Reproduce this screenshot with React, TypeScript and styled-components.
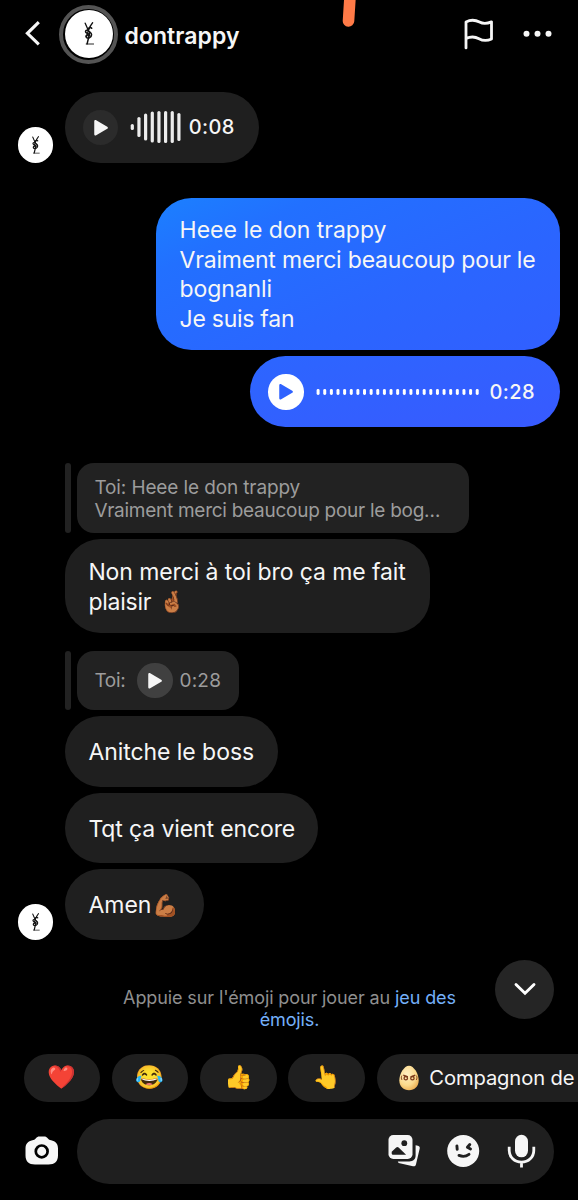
import React from 'react';
import styled, { createGlobalStyle } from 'styled-components';

const GlobalStyle = createGlobalStyle`
  * { box-sizing: border-box; }
  body {
    margin: 0;
    background: #000;
    color: #f6f6f6;
    font-family: Inter, "Liberation Sans", sans-serif;
    overflow: hidden;
  }
  svg { display: block; flex: none; }
`;

const Screen = styled.main`
  position: relative;
  display: flex;
  flex-direction: column;
  width: 578px;
  height: 1200px;
  overflow: hidden;
  background: #000;
`;

const Header = styled.header`
  display: flex;
  align-items: center;
  height: 68.5px;
  padding: 0 26.5px 0 23.5px;
`;

const HeaderAvatar = styled.div`
  display: grid;
  place-items: center;
  width: 59px;
  height: 59px;
  margin-left: 17.5px;
  border: 4px solid #545454;
  border-radius: 50%;
`;

const UserName = styled.h1`
  flex: 1;
  margin: 3px 0 0 6.5px;
  font-size: 23px;
  font-weight: 600;
  line-height: 30px;
  letter-spacing: 0.06px;
`;

const HeaderActions = styled.div`
  display: flex;
  align-items: center;
  gap: 29px;
`;

const StatusMark = styled.svg`
  position: absolute;
  top: 0;
  left: 336px;
`;

const AvatarDisc = styled.div<{ $size: number }>`
  display: grid;
  place-items: center;
  flex: none;
  width: ${p => p.$size}px;
  height: ${p => p.$size}px;
  border-radius: 50%;
  background: #fff;
`;

const Thread = styled.section`
  display: flex;
  flex-direction: column;
  height: 871.5px;
  padding: 23.5px 18px 0 17.5px;
`;

const Row = styled.div<{ $side?: 'left' | 'right'; $top?: number }>`
  display: flex;
  align-items: flex-end;
  justify-content: ${p => (p.$side === 'right' ? 'flex-end' : 'flex-start')};
  gap: 12px;
  margin-top: ${p => p.$top ?? 6}px;
  padding-left: ${p => (p.$side === 'left' ? 47.5 : 0)}px;
`;

const Bubble = styled.div<{ $tone?: 'sent' | 'sentLow'; $width: number }>`
  display: flex;
  flex-direction: column;
  justify-content: center;
  width: ${p => p.$width}px;
  min-height: 70.7px;
  padding: 18.8px 23.4px 16px;
  border-radius: 35.5px;
  font-size: 23px;
  line-height: 29.5px;
  white-space: nowrap;
  background: ${p =>
    p.$tone === 'sent'
      ? 'linear-gradient(155deg, #1b80ff 0%, #2270ff 22%, #2a66ff 60%, #315fff 100%)'
      : p.$tone === 'sentLow'
        ? 'linear-gradient(165deg, #2c66ff 0%, #385aff 100%)'
        : '#1f1f1f'};
`;

const TextLine = styled.span<{ $track?: number }>`
  display: flex;
  align-items: center;
  height: 29.5px;
  letter-spacing: ${p => p.$track ?? 0}px;
`;

const Emoji = styled.span<{ $size: number; $gap?: number }>`
  margin-left: ${p => p.$gap ?? 0}px;
  font-family: "Noto Color Emoji", sans-serif;
  font-size: ${p => p.$size}px;
  line-height: 1;
  letter-spacing: 0;
`;

const SkinEmoji = styled(Emoji)`
  filter: brightness(1.18) saturate(1.15);
`;

const Voice = styled(Bubble)`
  flex-direction: row;
  align-items: center;
  justify-content: flex-start;
  padding: 0 17.8px;
`;

const PlayDisc = styled.div<{ $fill: string }>`
  display: grid;
  place-items: center;
  flex: none;
  width: 35.5px;
  height: 35.5px;
  border-radius: 50%;
  background: ${p => p.$fill};
`;

const Wave = styled.svg<{ $left: number; $right: number }>`
  margin: 0 ${p => p.$right}px 0 ${p => p.$left}px;
`;

const Duration = styled.span`
  padding-top: 1.5px;
  font-size: 20px;
  font-weight: 500;
  letter-spacing: 0.35px;
`;

const Quote = styled.div`
  display: flex;
  align-items: stretch;
  gap: 6.3px;
`;

const QuoteBar = styled.div`
  width: 5.5px;
  border-radius: 3px;
  background: #222;
`;

const QuoteCard = styled.div<{ $width: number; $height: number }>`
  display: flex;
  flex-direction: column;
  justify-content: center;
  width: ${p => p.$width}px;
  height: ${p => p.$height}px;
  padding: 2px 17.6px 0;
  border-radius: 17px;
  background: #222;
  color: #9c9c9c;
  font-size: 19px;
  line-height: 23.5px;
  white-space: nowrap;
`;

const QuoteLine = styled.span<{ $track: number }>`
  letter-spacing: ${p => p.$track}px;
`;

const QuoteVoice = styled(QuoteCard)`
  flex-direction: row;
  align-items: center;
  justify-content: flex-start;
  padding-top: 0;
`;

const QuoteLabel = styled.span<{ $width: number }>`
  width: ${p => p.$width}px;
  padding-top: 1px;
  letter-spacing: -0.3px;
`;

const QuoteTime = styled.span`
  margin-left: 6.5px;
  padding-top: 1px;
  letter-spacing: 0.25px;
`;

const Notice = styled.p`
  margin: 47px 0 0;
  padding-left: 1px;
  text-align: center;
  font-size: 18px;
  line-height: 22.3px;
  letter-spacing: -0.11px;
  color: #8f8f8f;
`;

const Link = styled.a`
  color: #74b0fa;
`;

const ScrollDown = styled.button`
  position: absolute;
  top: 959.5px;
  left: 494.8px;
  display: grid;
  place-items: center;
  width: 59.5px;
  height: 59.5px;
  padding: 0;
  border: 0;
  border-radius: 50%;
  background: #252525;
`;

const Chips = styled.div`
  display: flex;
  gap: 11.8px;
  margin-top: 22.5px;
  padding-left: 23.6px;
`;

const Chip = styled.div<{ $wide?: boolean }>`
  display: flex;
  align-items: center;
  flex: none;
  justify-content: ${p => (p.$wide ? 'flex-start' : 'center')};
  width: ${p => (p.$wide ? 240 : 76.5)}px;
  height: 47.5px;
  padding-left: ${p => (p.$wide ? 22 : 0)}px;
  border-radius: 24px;
  background: #1f1f1f;
  font-size: 20.2px;
  letter-spacing: -0.12px;
  white-space: nowrap;
`;

const Tilted = styled(Emoji)`
  transform: rotate(-8deg);
`;

const ChipLabel = styled.span`
  margin-left: 10.5px;
`;

const Composer = styled.footer`
  display: flex;
  align-items: center;
  gap: 18.5px;
  margin-top: 17px;
  padding-left: 24.8px;
`;

const Field = styled.div`
  display: flex;
  align-items: center;
  justify-content: flex-end;
  gap: 26.5px;
  width: 477.5px;
  height: 65px;
  padding-right: 18.5px;
  border-radius: 32.5px;
  background: #1f1f1f;
`;

const Monogram = ({ scale }: { scale: number }) => (
  <svg width={12 * scale} height={24 * scale} viewBox="0 0 12 24" fill="none" stroke="#111" strokeLinecap="round">
    <path d="M2.2 1.2 5.6 9M9.6.8C8 2.6 6.700 5 5.400 8.600L3.400 15" strokeWidth="1.300" />
    <path d="M8.700 6.300C7.600 4.900 4.500 5.800 4.900 8c.4 2 3.800 2.200 3.700 4.800-.1 2.600-3.300 4-5 2.800-1.700-1.300.3-3.200 2-2.400" strokeWidth="1.500" />
    <path d="M4.200 8.400C2.800 8.200 2 9.400 2.900 10.500c1 1.200 3.700 1.200 3.900 3.200M6.800 10.500 4.100 21.800" strokeWidth="1.500" />
    <path d="M3.200 22h7.400" strokeWidth=".9" />
  </svg>
);

const PlayGlyph = ({ color }: { color: string }) => (
  <svg width="17.500" height="19.500" viewBox="0 0 16 18">
    <path d="M2 3.100v11.800c0 1 1 1.500 1.800 1L14 10c.8-.5.8-1.500 0-2L3.800 2.100C3 1.600 2 2.100 2 3.100Z" fill={color} />
  </svg>
);

const SHORT_WAVE = [6, 20, 27, 31, 32, 32, 32, 28];

const Egg = () => (
  <svg width="20" height="26" viewBox="0 0 20 26">
    <defs>
      <radialGradient id="egg" cx=".4" cy=".35" r=".75">
        <stop offset="0" stopColor="#fff0c4" />
        <stop offset=".6" stopColor="#fbd98c" />
        <stop offset="1" stopColor="#e9a648" />
      </radialGradient>
    </defs>
    <path d="M10 .8C5.200.8.3 8.800.3 15.500.3 21.400 4.500 25.300 10 25.300s9.700-3.900 9.700-9.800C19.700 8.800 14.800.8 10 .8Z" fill="url(#egg)" />
    <g fill="none" stroke="#7d3b1c" strokeLinecap="round">
      <path d="M4.800 10.300 8.300 11.600M15.800 10.300 12.300 11.600" strokeWidth="1.400" />
      <circle cx="6.800" cy="13.200" r="1.700" strokeWidth="1.300" />
      <circle cx="13.400" cy="13.200" r="1.700" strokeWidth="1.300" />
      <path d="M2.700 11c-.6 1.200-.5 2.500.1 3.600M17.600 11c.6 1.200.5 2.500-.1 3.600" strokeWidth=".9" />
    </g>
  </svg>
);

const BackIcon = () => (
  <svg width="18" height="30" viewBox="0 0 18 30">
    <path d="M14.800 3.200 3.400 14.300 14.800 25.400" fill="none" stroke="#f6f6f6" strokeWidth="3.100" />
  </svg>
);

const FlagIcon = () => (
  <svg width="30" height="33" viewBox="0 0 30 33" fill="none" stroke="#f6f6f6" strokeWidth="2.800" strokeLinecap="round" strokeLinejoin="round">
    <path d="M2 29.900V3.900C6.500 1.700 11 1.700 15.500 4.100c4 2.200 7.500 1.700 12-.2v17C23 23.100 19 22.900 15 20.700c-4.500-2.400-8.500-2.200-13-.2" />
  </svg>
);

const MoreIcon = () => (
  <svg width="29" height="8" viewBox="0 0 29 8" fill="#f6f6f6">
    <circle cx="3.500" cy="3.700" r="3" />
    <circle cx="14.500" cy="3.700" r="3" />
    <circle cx="25.500" cy="3.700" r="3" />
  </svg>
);

const CameraIcon = () => (
  <svg width="33.500" height="30" viewBox="0 0 33.500 30">
    <path d="M10.700 2.400C12 1.100 13 .6 14.300.6h5c1.300 0 2.300.5 3.600 1.800 1.100 1.100 1.500 1.500 3.200 1.800 4.400.8 6.900 3.500 6.900 8.200v6.900c0 6.300-3.300 9.200-9.600 9.200H10C3.800 28.500.5 25.600.5 19.300v-6.900c0-4.700 2.500-7.400 6.900-8.200 1.700-.3 2.200-.7 3.300-1.800Z" fill="#f6f6f6" />
    <circle cx="16.700" cy="15.400" r="5.900" fill="none" stroke="#000" strokeWidth="2.700" />
  </svg>
);

const GalleryIcon = () => (
  <svg width="33" height="34" viewBox="0 0 33 34">
    <path d="M27.600 11.200l2.400.5c1.400.4 2 1.400 1.700 2.800L28 30.300c-.3 1.700-1.400 2.300-3 2L10.600 28.900l-.8-1.500h11.500c4 0 6.300-2.200 6.300-6.200Z" fill="#f6f6f6" />
    <rect x=".5" y="1" width="24" height="24" rx="4.800" fill="#f6f6f6" />
    <circle cx="16.300" cy="9.200" r="2.900" fill="#1f1f1f" />
    <path d="M3.700 19.500v-1.700l4.500-4.300c.8-.7 1.600-.7 2.400 0l7.500 7.300H5.600c-1.200 0-1.900-.5-1.900-1.300Z" fill="#1f1f1f" />
  </svg>
);

const WinkIcon = () => (
  <svg width="33" height="34" viewBox="0 0 33 34">
    <circle cx="16.200" cy="17" r="16" fill="#f6f6f6" />
    <g fill="none" stroke="#1f1f1f" strokeWidth="2.900" strokeLinecap="round" strokeLinejoin="round">
      <path d="M9.900 11.900 10.200 15.400M22.800 10.500 20.400 13.300 23.500 15" />
      <path d="M12 21.400c3.300 1.400 7.200 1 10-1" />
    </g>
  </svg>
);

const MicIcon = () => (
  <svg width="29" height="34" viewBox="0 0 29 34">
    <rect x="8" y=".8" width="13" height="22.500" rx="6.500" fill="#f6f6f6" />
    <path d="M2.200 12.800v3.400c0 7 5.300 12 12.300 12s12.300-5 12.300-12v-3.400M14.500 28.200v5.300" fill="none" stroke="#f6f6f6" strokeWidth="2.800" />
  </svg>
);

export default function App() {
  return (
    <Screen>
      <GlobalStyle />
      <Header>
        <BackIcon />
        <HeaderAvatar>
          <AvatarDisc $size={48}><Monogram scale={1} /></AvatarDisc>
        </HeaderAvatar>
        <UserName>dontrappy</UserName>
        <HeaderActions>
          <FlagIcon />
          <MoreIcon />
        </HeaderActions>
      </Header>
      <StatusMark width="24" height="30" viewBox="0 0 24 30">
        <path d="M14.200-6 12.500 21" stroke="#ff7a47" strokeWidth="11.600" strokeLinecap="round" />
      </StatusMark>

      <Thread>
        <Row $top={0}>
          <AvatarDisc $size={35.5}><Monogram scale={0.78} /></AvatarDisc>
          <Voice $width={193.8}>
            <PlayDisc $fill="#2b2b2b"><PlayGlyph color="#f6f6f6" /></PlayDisc>
            <Wave $left={12} $right={7.5} width="51" height="34" viewBox="0 0 51 34">
              {SHORT_WAVE.map((h, i) => (
                <rect key={i} x={0.7 + i * 6.66} y={17 - h / 2} width="3.200" height={h} rx="1.600" fill="#ececec" />
              ))}
            </Wave>
            <Duration>0:08</Duration>
          </Voice>
        </Row>

        <Row $side="right" $top={35}>
          <Bubble $tone="sent" $width={403.8}>
            <TextLine>Heee le don trappy</TextLine>
            <TextLine $track={-0.2}>Vraiment merci beaucoup pour le</TextLine>
            <TextLine $track={-0.1}>bognanli</TextLine>
            <TextLine $track={-0.27}>Je suis fan</TextLine>
          </Bubble>
        </Row>
        <Row $side="right">
          <Voice $tone="sentLow" $width={309.8}>
            <PlayDisc $fill="#fff"><PlayGlyph color="#2f62ff" /></PlayDisc>
            <Wave $left={12.3} $right={9.8} width="164" height="8" viewBox="0 0 164 8">
              {Array.from({ length: 25 }, (_, i) => (
                <rect key={i} x={0.6 + i * 6.63} y="1" width="3" height="6" rx="1.400" fill="#fff" />
              ))}
            </Wave>
            <Duration>0:28</Duration>
          </Voice>
        </Row>

        <Row $side="left" $top={35.5}>
          <Quote>
            <QuoteBar />
            <QuoteCard $width={392.5} $height={70.7}>
              <QuoteLine $track={-0.12}>Toi: Heee le don trappy</QuoteLine>
              <QuoteLine $track={-0.27}>Vraiment merci beaucoup pour le bog…</QuoteLine>
            </QuoteCard>
          </Quote>
        </Row>
        <Row $side="left">
          <Bubble $width={365}>
            <TextLine $track={-0.1}>Non merci à toi bro ça me fait</TextLine>
            <TextLine $track={-0.25}>plaisir<SkinEmoji $size={21} $gap={8}>🤞🏾</SkinEmoji></TextLine>
          </Bubble>
        </Row>

        <Row $side="left" $top={18}>
          <Quote>
            <QuoteBar />
            <QuoteVoice $width={162} $height={58.7}>
              <QuoteLabel $width={43}>Toi:</QuoteLabel>
              <PlayDisc $fill="#404040"><PlayGlyph color="#f6f6f6" /></PlayDisc>
              <QuoteTime>0:28</QuoteTime>
            </QuoteVoice>
          </Quote>
        </Row>
        <Row $side="left"><Bubble $width={213}><TextLine $track={-0.06}>Anitche le boss</TextLine></Bubble></Row>
        <Row $side="left"><Bubble $width={253.3}><TextLine $track={-0.12}>Tqt ça vient encore</TextLine></Bubble></Row>
        <Row>
          <AvatarDisc $size={35.5}><Monogram scale={0.78} /></AvatarDisc>
          <Bubble $width={139}><TextLine>Amen<SkinEmoji $size={21.5} $gap={0.5}>💪🏾</SkinEmoji></TextLine></Bubble>
        </Row>
      </Thread>

      <Notice>
        Appuie sur l'émoji pour jouer au <Link>jeu des<br />émojis.</Link>
      </Notice>
      <ScrollDown aria-label="Descendre">
        <svg width="24" height="16" viewBox="0 0 24 16">
          <path d="M3 3.500 12 12.300 21 3.500" fill="none" stroke="#fff" strokeWidth="2.900" strokeLinecap="round" strokeLinejoin="miter" />
        </svg>
      </ScrollDown>

      <Chips>
        <Chip><Emoji $size={23}>❤️</Emoji></Chip>
        <Chip><Emoji $size={23}>😂</Emoji></Chip>
        <Chip><Emoji $size={23}>👍</Emoji></Chip>
        <Chip><Tilted $size={23}>👆</Tilted></Chip>
        <Chip $wide><Egg /><ChipLabel>Compagnon de</ChipLabel></Chip>
      </Chips>

      <Composer>
        <CameraIcon />
        <Field>
          <GalleryIcon />
          <WinkIcon />
          <MicIcon />
        </Field>
      </Composer>
    </Screen>
  );
}
